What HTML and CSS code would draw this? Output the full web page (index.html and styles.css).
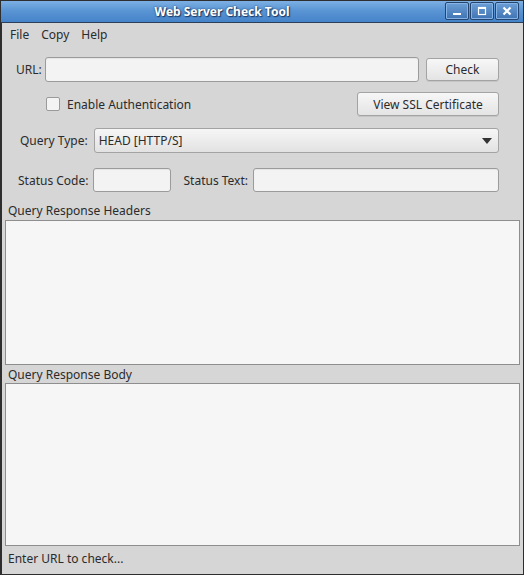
FILE: index.html
```html
<!DOCTYPE html>
<html>
<head>
<meta charset="utf-8">
<link rel="stylesheet" href="styles.css">
</head>
<body>
<div class="window">
  <div class="titlebar">
    <div class="title">Web Server Check Tool</div>
    <div class="wbtns">
      <div class="wbtn"><svg width="12" height="10" viewBox="0 0 12 10"><rect x="2" y="7" width="8" height="2" fill="#fff"/></svg></div>
      <div class="wbtn"><svg width="12" height="10" viewBox="0 0 12 10"><rect x="2.5" y="1.5" width="7" height="7" fill="none" stroke="#fff" stroke-width="1.2"/><rect x="2" y="1" width="8" height="2" fill="#fff"/></svg></div>
      <div class="wbtn"><svg width="12" height="10" viewBox="0 0 12 10"><path d="M2.5 1.5 L9.5 8.5 M9.5 1.5 L2.5 8.5" stroke="#fff" stroke-width="2.2"/></svg></div>
    </div>
  </div>
  <div class="client">
    <div class="menubar">
      <span class="menu">File</span>
      <span class="menu">Copy</span>
      <span class="menu">Help</span>
    </div>
    <div class="form">
      <div class="row row1">
        <span class="lbl lbl-url">URL:</span>
        <div class="input url"></div>
        <div class="btn check">Check</div>
      </div>
      <div class="row row2">
        <div class="checkbox"></div>
        <span class="lbl cblbl">Enable Authentication</span>
        <div class="btn ssl">View SSL Certificate</div>
      </div>
      <div class="row row3">
        <span class="lbl lbl-qt">Query Type:</span>
        <div class="combo"><span>HEAD [HTTP/S]</span><svg width="10" height="6" viewBox="0 0 10 6"><path d="M0 0 H10 L5 6 Z" fill="#333"/></svg></div>
      </div>
      <div class="row row4">
        <span class="lbl lbl-sc">Status Code:</span>
        <div class="input scode"></div>
        <span class="lbl lbl-st">Status Text:</span>
        <div class="input stext"></div>
      </div>
    </div>
    <div class="seclabel first">Query Response Headers</div>
    <div class="textarea headers"></div>
    <div class="seclabel second">Query Response Body</div>
    <div class="textarea body"></div>
    <div class="statusbar">Enter URL to check...</div>
  </div>
</div>
</body>
</html>
```

FILE: styles.css
```css
* { box-sizing: border-box; }
html, body { margin: 0; padding: 0; background: #d6d6d6; }
body { font-family: "Noto Sans", "Open Sans", sans-serif; font-size: 12px; color: #2b2b2b; }

.window {
  width: 524px; height: 575px;
  border: 1px solid #2e2e2e;
  border-left-width: 2px;
  background: #d6d6d6;
  display: flex; flex-direction: column;
}
.titlebar {
  height: 22px; flex: none;
  margin-left: -1px;
  background: linear-gradient(#7db0e4, #5a95d4 45%, #4583c9);
  border-bottom: 1px solid #2b3f5a;
  position: relative;
  display: flex; align-items: center;
  padding-right: 80px;
}
.title {
  flex: 1; text-align: center;
  color: #fff; font-weight: bold; font-size: 12px;
  text-shadow: 0 0 2px #1d3a63, 1px 1px 1px #1d3a63;
}
.wbtns {
  position: absolute; right: 4px; top: 1px;
  display: flex; gap: 1px;
}
.wbtn {
  width: 24px; height: 18px;
  border: 1px solid #23456f;
  border-radius: 2px;
  background: linear-gradient(#6c9fd6, #3f73b3);
  box-shadow: inset 0 0 0 1px #86b4e6;
  display: flex; align-items: center; justify-content: center;
}
.client {
  flex: 1; display: flex; flex-direction: column;
  padding: 0 3px 0 3px;
}
.menubar { height: 23px; display: flex; align-items: center; padding-left: 5px; font-size: 12px; }
.menu { margin-right: 12px; }

.form { padding-right: 21px; }
.row { display: flex; align-items: center; }
.row1 { margin-top: 11px; height: 25px; }
.row2 { margin-top: 10px; height: 24px; }
.row3 { margin-top: 12px; height: 25px; }
.row4 { margin-top: 15px; height: 24px; }

.lbl { white-space: nowrap; }
.lbl-url { margin-left: 11px; }
.input {
  height: 100%;
  background: #f3f3f3;
  border: 1px solid #9b9b9b;
  border-radius: 3px;
  box-shadow: inset 0 1px 1px rgba(0,0,0,0.06);
}
.url { flex: 1; margin-left: 3px; }
.btn {
  height: 23px;
  border: 1px solid #a3a3a3;
  border-radius: 3px;
  background: linear-gradient(#f7f7f7, #e4e4e4);
  display: flex; align-items: center; justify-content: center;
  box-shadow: 0 1px 0 rgba(0,0,0,0.08);
}
.check { width: 73px; margin-left: 7px; }
.checkbox {
  width: 14px; height: 14px;
  margin-left: 41px;
  border: 1px solid #9b9b9b; border-radius: 2px;
  background: #f3f3f3;
}
.cblbl { margin-left: 7px; }
.ssl { width: 142px; height: 24px; margin-left: auto; }
.lbl-qt { margin-left: 15px; }
.combo {
  flex: 1; height: 100%; margin-left: 6px;
  border: 1px solid #a3a3a3; border-radius: 3px;
  background: linear-gradient(#f6f6f6, #e2e2e2);
  display: flex; align-items: center; justify-content: space-between;
  padding: 0 6px 0 4px;
}
.lbl-sc { margin-left: 13px; }
.scode { width: 78px; margin-left: 5px; }
.lbl-st { margin-left: 12px; }
.stext { flex: 1; margin-left: 5px; }

.seclabel { display: flex; align-items: center; padding-left: 3px; }
.seclabel.first { margin-top: 9px; height: 19px; }
.seclabel.second { height: 18px; }
.textarea {
  background: #f6f6f6;
  border: 1px solid #8e8e8e;
}
.headers { height: 145px; }
.body { height: 163px; }
.statusbar { height: 24px; display: flex; align-items: center; padding-left: 3px; }
```
